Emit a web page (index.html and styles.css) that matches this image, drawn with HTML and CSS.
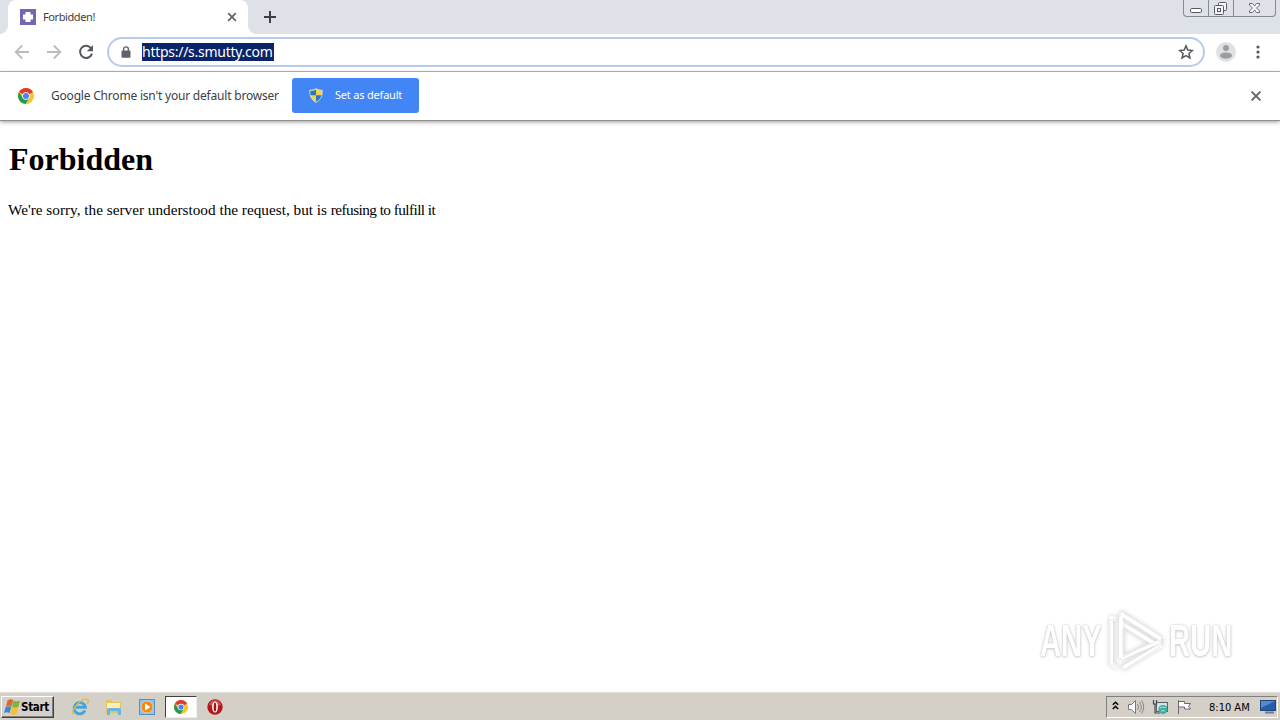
FILE: index.html
```html
<!DOCTYPE html>
<html lang="en">
<head>
  <meta charset="UTF-8">
  <title>Forbidden!</title>
  <link rel="stylesheet" href="styles.css">
</head>
<body>
  <!-- shared symbols -->
  <svg class="defs" width="0" height="0">
    <symbol id="chrome" viewBox="0 0 16 16">
      <circle cx="8" cy="8" r="8" fill="#fbc22b"/>
      <path d="M8 8 L1.1 4 A8 8 0 0 1 14.9 4 Z" fill="#de3c30"/>
      <path d="M1.1 4A8 8 0 0 0 7.6 16L11.3 9.8L8 11L4.6 10Z" fill="#229a54"/>
      <circle cx="8" cy="8" r="3.7" fill="#fff"/>
      <circle cx="8" cy="8" r="3" fill="#4285f4"/>
    </symbol>
  </svg>

  <div class="window">
    <!-- Tab strip -->
    <div class="tabstrip">
      <div class="tab-edge"></div>
      <div class="tab">
        <svg class="favicon" width="16" height="16" viewBox="0 0 16 16">
          <rect width="16" height="16" fill="#7367b5"/>
          <path d="M5.500 3h5v2.500H13v5h-2.500V13h-5v-2.500H3v-5h2.500z" fill="#fff"/>
        </svg>
        <span class="tab-title">Forbidden!</span>
        <svg class="tab-close" width="10" height="10" viewBox="0 0 10 10"><path d="M1.2 1.2l7.6 7.6M8.8 1.2L1.2 8.8" stroke="#5f6368" stroke-width="1.7"/></svg>
      </div>
      <div class="tab-edge right"></div>
      <svg class="new-tab" width="12" height="12" viewBox="0 0 12 12"><path d="M6 0v12M0 6h12" stroke="#3c4043" stroke-width="2"/></svg>
      <div class="window-buttons">
        <span class="min"><svg width="24" height="16" viewBox="0 0 24 16"><rect x="6.5" y="8.5" width="11" height="4" rx="1.2" fill="#fff" stroke="#555a66"/></svg></span>
        <span class="max"><svg width="24" height="16" viewBox="0 0 24 16"><g fill="#f3f4f6" stroke="#555a66"><rect x="9.5" y="2.5" width="8" height="8" rx="1"/><rect x="5.5" y="5.5" width="9" height="9" rx="1"/><rect x="8.5" y="8.5" width="3" height="3"/></g></svg></span>
        <span class="close"><svg width="41" height="16" viewBox="0 0 41 16"><path d="M15.5 3.5h3l2 2.5 2-2.5h3v1.5l-3 3 3 3v1.5h-3l-2-2.5-2 2.5h-3V11l3-3-3-3z" fill="#fff" stroke="#666b76"/></svg></span>
      </div>
    </div>

    <!-- Toolbar -->
    <div class="toolbar">
      <svg class="nav" width="16" height="16" viewBox="0 0 16 16"><path d="M15 8H2M8.2 1.5L1.7 8l6.5 6.5" fill="none" stroke="#babcbe" stroke-width="1.8"/></svg>
      <svg class="nav" width="16" height="16" viewBox="0 0 16 16"><path d="M1 8h13M7.8 1.5L14.3 8l-6.5 6.5" fill="none" stroke="#babcbe" stroke-width="1.8"/></svg>
      <svg class="nav" width="16" height="16" viewBox="0 0 16 16"><path d="M13.2 4.3A6.1 6.1 0 1 0 14 9.6" fill="none" stroke="#55585c" stroke-width="2"/><path d="M15 1v6.2H8.8z" fill="#55585c"/></svg>
      <div class="omnibox">
        <svg class="lock" width="10" height="12" viewBox="0 0 10 12"><rect x="0.5" y="4.5" width="9" height="7.2" rx="1" fill="#5f6368"/><path d="M2.6 5V3.3a2.4 2.4 0 0 1 4.8 0V5" fill="none" stroke="#5f6368" stroke-width="1.4"/></svg>
        <span class="url">https://s.smutty.com</span>
        <svg class="star" width="16" height="16" viewBox="0 0 16 16"><path d="M8 1.9l1.8 4.2 4.6.4-3.5 3 1.1 4.5-4-2.4L4 14l1.1-4.5-3.5-3 4.6-.4z" fill="none" stroke="#55585c" stroke-width="1.5"/></svg>
      </div>
      <svg class="avatar" width="20" height="20" viewBox="0 0 20 20"><circle cx="10" cy="10" r="10" fill="#e0e1e3"/><circle cx="10" cy="6" r="3" fill="#9b9da0"/><ellipse cx="10" cy="13.6" rx="6" ry="3.2" fill="#9b9da0"/></svg>
      <svg class="menu" width="4" height="14" viewBox="0 0 4 14"><g fill="#55585c"><circle cx="2" cy="2" r="1.6"/><circle cx="2" cy="7" r="1.6"/><circle cx="2" cy="12" r="1.6"/></g></svg>
    </div>

    <!-- Default browser bar -->
    <div class="infobar">
      <svg width="16" height="16"><use href="#chrome"/></svg>
      <span class="info-text">Google Chrome isn't your default browser</span>
      <div class="default-btn">
        <svg width="14" height="15" viewBox="0 0 14 15">
          <path d="M7 .7c2 1.2 4 1.6 6.2 1.6 0 5.6-1.4 9.4-6.2 12C2.2 11.7.8 7.9.8 2.3 3 2.3 5 1.9 7 .7z" fill="#f5d24b" stroke="#dbe0d4"/>
          <path d="M7 1.8V7.2H1.6C1.3 5.8 1.3 4.5 1.3 3 3.3 3 5 2.6 7 1.8z" fill="#2877c9"/>
          <path d="M7 7.2h5.4c-.6 3-2.2 5-5.4 6.5z" fill="#2877c9"/>
        </svg>
        <span class="default-text">Set as default</span>
      </div>
      <svg class="info-close" width="10" height="10" viewBox="0 0 10 10"><path d="M.6.6l8.8 8.8M9.4.6L.6 9.4" stroke="#606368" stroke-width="1.9"/></svg>
    </div>

    <!-- Page -->
    <div class="page">
      <h1>Forbidden</h1>
      <p>We're sorry, the server understood the request, but is <span class="tight">refusing to fulfill it</span></p>
      <div class="watermark">
        <span class="any">ANY</span>
        <svg width="58" height="64" viewBox="0 0 58 64">
          <g fill="none" stroke="#fff" stroke-width="4" stroke-linejoin="round">
            <path d="M10 10L4 9V55L10 58"/>
            <path d="M14 49V5L54 30M14 14L48 35"/>
            <path d="M14 49L54 32M16 59L55 36"/>
          </g>
          <g fill="none" stroke="#e9e9e9" stroke-width="1" stroke-linejoin="round">
            <path d="M8 56V10l5 -2V3q2-2 4 0L55 28q2 2 0 5L17 14V46L47 33"/>
            <path d="M12 8L3 11V55l9 3M16 20V48L40 34z"/>
            <path d="M56 33L15 55q-2 4 2 6L54 37z"/>
          </g>
        </svg>
        <span class="run">RUN</span>
      </div>
    </div>

    <!-- Taskbar -->
    <div class="taskbar">
      <div class="start">
        <svg width="17" height="16" viewBox="0 0 17 16">
          <path d="M3.500 1.500q3-2 5.700-.5L7.500 7.500Q4.500 6 2 7.500z" fill="#e8632c"/>
          <path d="M9.500 1.500q3 1.500 6.500 0L14.400 8q-3 1.500-6.400 0z" fill="#7fb43c"/>
          <path d="M1.700 8q2.800-1.500 5.600 0L5.600 14Q3 12.500 0 14z" fill="#3f85cf"/>
          <path d="M7.800 8.400q3 1.500 6.400.2L12.600 15q-3 1.500-6.500-.2z" fill="#f6c12c"/>
        </svg>
        <span class="start-text">Start</span>
      </div>
      <div class="quick">
        <svg width="18" height="18" viewBox="0 0 18 18">
          <path d="M14 12.500A5.700 5.700 0 1 1 14.400 9.200H5" fill="none" stroke="#43a5df" stroke-width="2.900"/>
          <path d="M2.500 16.500C-2 13 12-2 17 2q1 1.500-1 4" fill="none" stroke="#e5b936" stroke-width="1.300"/>
        </svg>
        <svg width="18" height="18" viewBox="0 0 18 18">
          <path d="M1 2h5l1 2h9v11H1z" fill="#e4c45e"/><path d="M2 5h13v6H2z" fill="#fbf0b4"/>
          <path d="M2 17v-5q0-2 2-2h10q2 0 2 2v5h-3v-4H5v4z" fill="#65b5e2"/>
        </svg>
        <svg width="16" height="16" viewBox="0 0 16 16">
          <rect x=".5" y=".5" width="15" height="15" fill="#8fc3ee" stroke="#4b91cf"/>
          <circle cx="8" cy="8" r="6" fill="#f18a1c" stroke="#fbd6a0" stroke-width=".7"/><path d="M6 4.500L11.500 8 6 11.500z" fill="#fff"/>
        </svg>
        <div class="task-active"><svg width="14" height="14"><use href="#chrome"/></svg></div>
        <svg width="16" height="16" viewBox="0 0 16 16">
          <circle cx="8" cy="8" r="7.700" fill="#b4181d"/><path d="M2 6a6.200 6.200 0 0 1 12 0q-6 2-12 0z" fill="#d0504c"/>
          <ellipse cx="8" cy="8" rx="2.900" ry="5.600" fill="#fff"/><ellipse cx="8" cy="8" rx="1.300" ry="4.600" fill="#a31217"/>
        </svg>
      </div>
      <div class="tray">
        <svg class="expand" width="7" height="9" viewBox="0 0 7 9"><path d="M.8 3.800L3.500 1.200l2.700 2.600M.8 8l2.700-2.600L6.200 8" fill="none" stroke="#000" stroke-width="1.500"/></svg>
        <svg width="18" height="16" viewBox="0 0 18 16"><path d="M1.500 5.500h3l4-4v13l-4-4h-3z" fill="#fff" stroke="#77797b"/><path d="M10.500 5q2 3 0 6M12.500 3q3.500 5 0 10M14.500 1.500q4.500 6.500 0 13" fill="none" stroke="#85888a"/></svg>
        <svg width="17" height="16" viewBox="0 0 17 16"><rect x="4.500" y="3.500" width="11" height="9" fill="#cfe4e6" stroke="#566166"/><path d="M1.500 1v4h3V1M3 5v9h5" fill="none" stroke="#44494b" stroke-width="1.200"/><circle cx="11" cy="10.500" r="4.500" fill="#3eaaa3"/><path d="M8 9q3-2 6 0M9 12q2-1 4 0" stroke="#b7e2cf" fill="none"/></svg>
        <svg width="17" height="16" viewBox="0 0 17 16"><path d="M2.500 1v14M2.500 2.500h6v2h6l-2 3 2 2.500h-6v-2h-6" fill="#fff" stroke="#696c6e"/></svg>
        <span class="clock">8:10 AM</span>
        <svg class="desktop" width="16" height="14" viewBox="0 0 16 14"><rect x=".5" y=".5" width="15" height="10" fill="#245dac" stroke="#244575"/><path d="M1 1h14L1 8z" fill="#4e8bd1"/><path d="M5 12.500h9" stroke="#657e9d" stroke-width="2"/></svg>
      </div>
    </div>
  </div>
</body>
</html>
```

FILE: styles.css
```css
* {
  box-sizing: border-box;
}
body {
  margin: 0;
  font-family: "DejaVu Sans Condensed", "DejaVu Sans", sans-serif;
  background: #fff;
  overflow: hidden;
}
svg {
  display: block;
  flex: none;
}
span {
  white-space: nowrap;
}
.defs {
  position: absolute;
}
.window {
  width: 1280px;
  height: 720px;
  display: flex;
  flex-direction: column;
}

/* tabs */
.tabstrip {
  height: 34px;
  background: #dee1e8;
  display: flex;
  flex: none;
}
.tab-edge {
  width: 8px;
  background: radial-gradient(circle at 0 26px, #dee1e8 7.5px, #fff 8px);
  clip-path: inset(26px 0 0 0);
}
.tab-edge.right {
  transform: scaleX(-1);
}
.tab {
  width: 240px;
  padding: 0 11px 0 12px;
  display: flex;
  align-items: center;
  background: #fff;
  border-radius: 8px 8px 0 0;
}
.tab-title {
  margin: 0 0 2px 7px;
  font: 11px "Noto Sans", sans-serif;
  letter-spacing: -0.4px;
  color: #3c4043;
}
.tab-close {
  margin-left: auto;
}
.new-tab {
  margin: 11px 0 0 8px;
}
.window-buttons {
  display: flex;
  width: 93px;
  height: 17px;
  margin: 0 4px 0 auto;
  border: 1px solid #848996;
  border-top: 0;
  border-radius: 0 0 4px 4px;
}
.window-buttons .max {
  border-left: 1px solid #848996;
  border-right: 1px solid #848996;
}

/* toolbar */
.toolbar {
  height: 38px;
  padding: 0 20px 2px 14px;
  display: flex;
  flex: none;
  align-items: center;
  border-bottom: 1px solid #aeb0b3;
}
.nav {
  margin-right: 16px;
}
.omnibox {
  width: 1098px;
  height: 30px;
  margin-left: -3px;
  padding: 0 9px 0 12px;
  display: flex;
  align-items: center;
  border: 2px solid #b4cbed;
  border-radius: 15px;
}
.url {
  width: 132px;
  height: 18px;
  margin-left: 11px;
  font: 14px/18px "Noto Sans", sans-serif;
  letter-spacing: -0.27px;
  color: #fff;
  background: #0a246a;
}
.star {
  margin-left: auto;
}
.avatar {
  margin-left: 11px;
}
.menu {
  margin-left: auto;
}

/* info bar */
.infobar {
  height: 49px;
  padding: 0 19px 0 18px;
  display: flex;
  flex: none;
  align-items: center;
  border-bottom: 1px solid #909090;
  box-shadow: 0 1px 4px #999;
}
.info-text {
  width: 228px;
  margin: 0 0 2px 17px;
  font: 12px "Noto Sans", sans-serif;
  letter-spacing: -0.2px;
  color: #3c4043;
}
.default-btn {
  width: 127px;
  height: 35px;
  margin: 0 0 1px 13px;
  padding-left: 17px;
  display: flex;
  align-items: center;
  background: #4285f4;
  border-radius: 3px;
}
.default-text {
  margin: 0 0 2px 12px;
  font: 11px "Noto Sans", sans-serif;
  letter-spacing: -0.2px;
  color: #fff;
}
.info-close {
  margin-left: auto;
}

/* page */
.page {
  flex: 1;
  padding: 0 8px;
  font-family: "Liberation Serif", serif;
  font-size: 15.25px;
  color: #000;
  display: flex;
  flex-direction: column;
}
h1 {
  margin: 20px 0 22px 1px;
  font-size: 32px;
  line-height: 37px;
}
p {
  margin: 0;
  line-height: 20px;
}
.tight {
  letter-spacing: -0.55px;
}
.watermark {
  margin: auto 40px 20px auto;
  display: flex;
  align-items: center;
  font: bold 45px/50px "Liberation Sans", sans-serif;
  color: #fff;
  text-shadow: 0 0 2px #bbb, 0 1px 4px #ccc;
}
.watermark svg {
  margin: 0 4px;
  filter: drop-shadow(0 0 2px #ccc);
}
.any, .run {
  width: 63px;
  transform: scaleX(0.65);
  transform-origin: 0 50%;
  background: linear-gradient(#fff 50%, #f1f1f1 50%);
  background-clip: text;
  -webkit-text-fill-color: #fff;
}

/* taskbar */
.taskbar {
  height: 27px;
  padding: 2px 2px 1px 1px;
  display: flex;
  flex: none;
  align-items: center;
  background: #d4d0c8;
  box-shadow: 0 -1px 0 #e2dfd8;
}
.start {
  width: 53px;
  height: 22px;
  padding-left: 2px;
  display: flex;
  align-items: center;
  border: 1px solid;
  border-color: #fff #404040 #404040 #fff;
  box-shadow: inset -1px -1px 0 #808080;
}
.start-text {
  font-size: 11.5px;
  font-weight: bold;
  letter-spacing: -0.3px;
}
.quick {
  display: flex;
  align-items: center;
  margin-left: 17px;
}
.quick > svg {
  margin-right: 16px;
}
.task-active {
  width: 32px;
  height: 22px;
  margin: 0 10px 0 -6px;
  display: flex;
  align-items: center;
  justify-content: center;
  background: #fff;
  border: 1px solid;
  border-color: #404040 #eee #eee #404040;
}
.tray {
  width: 172px;
  height: 22px;
  margin-left: auto;
  padding: 0 1px 0 5px;
  display: flex;
  align-items: center;
  gap: 7px;
  border: 1px solid;
  border-color: #808080 #fff #fff #808080;
}
.expand {
  margin: 0 1px 3px 0;
}
.clock {
  margin-left: 9px;
  font-size: 11px;
}
.desktop {
  margin-left: auto;
}
```
